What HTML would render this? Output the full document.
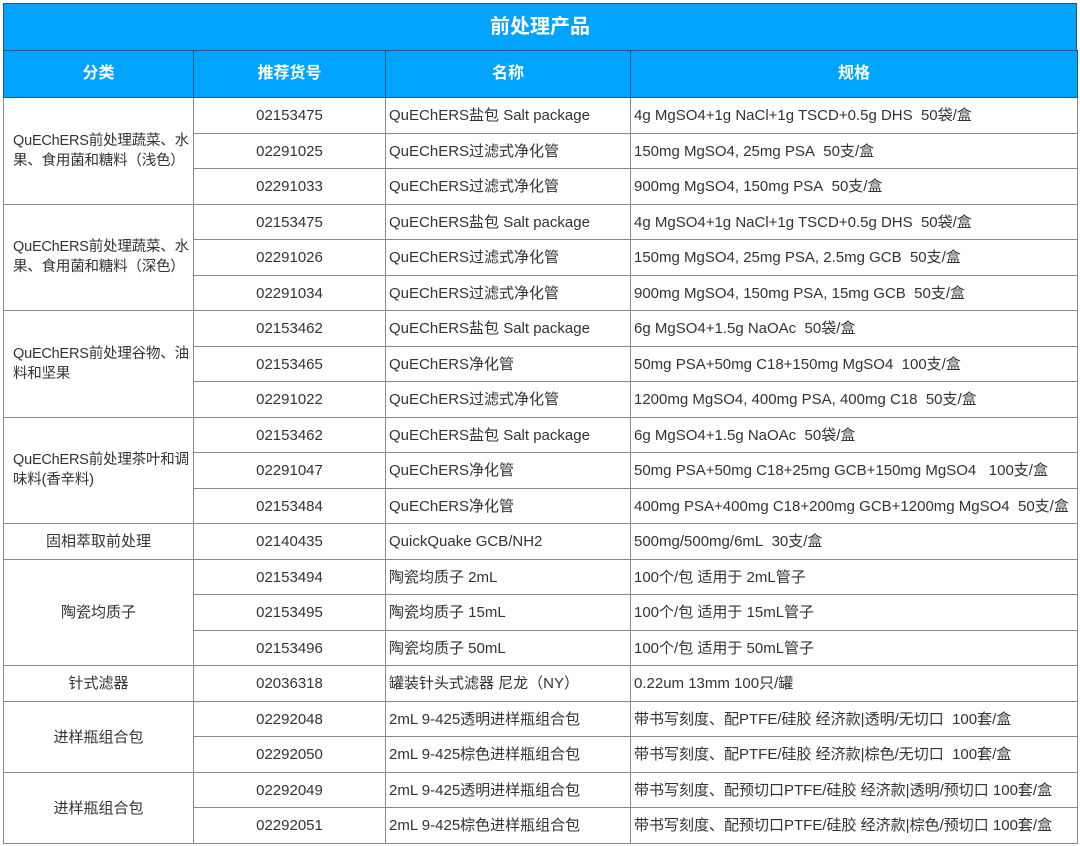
<!DOCTYPE html>
<html><head><meta charset="utf-8"><style>
body{margin:0;background:#fff;width:1080px;height:846px;overflow:hidden;font-family:"Liberation Sans","Noto Sans CJK SC",sans-serif;}
.t{position:absolute;left:3px;top:3px;width:1074px;height:47px;background:#00a3fe;color:#fff;font-weight:bold;font-size:20px;text-align:center;line-height:47px;border:1px solid #1e5a80;box-sizing:border-box;border-bottom:none}
table{position:absolute;left:3px;top:50px;border-collapse:collapse;table-layout:fixed;width:1074px}
td,th{border:1px solid #8a8a8a;font-size:15px;line-height:20px;vertical-align:middle;color:#333;padding:2px 3px 0;height:32.5px;white-space:nowrap;overflow:hidden}
th{background:#00a3fe;color:#fff;font-size:16px;height:46px;padding:0 3px;border-color:#1e5a80}
td.c{text-align:center}
td.w{font-size:14.5px;line-height:20px;text-align:left;padding:0 0 0 9px;letter-spacing:-0.2px}
</style></head><body>
<div class="t">前处理产品</div>
<table>
<colgroup><col style="width:190px"><col style="width:192px"><col style="width:245px"><col style="width:447px"></colgroup>
<tr><th>分类</th><th>推荐货号</th><th>名称</th><th>规格</th></tr>
<tr><td rowspan="3" class="w">QuEChERS前处理蔬菜、水<br>果、食用菌和糖料（浅色）</td><td class="c">02153475</td><td>QuEChERS盐包 Salt package</td><td>4g MgSO4+1g NaCl+1g TSCD+0.5g DHS&nbsp; 50袋/盒</td></tr>
<tr><td class="c">02291025</td><td>QuEChERS过滤式净化管</td><td>150mg MgSO4, 25mg PSA&nbsp; 50支/盒</td></tr>
<tr><td class="c">02291033</td><td>QuEChERS过滤式净化管</td><td>900mg MgSO4, 150mg PSA&nbsp; 50支/盒</td></tr>
<tr><td rowspan="3" class="w">QuEChERS前处理蔬菜、水<br>果、食用菌和糖料（深色）</td><td class="c">02153475</td><td>QuEChERS盐包 Salt package</td><td>4g MgSO4+1g NaCl+1g TSCD+0.5g DHS&nbsp; 50袋/盒</td></tr>
<tr><td class="c">02291026</td><td>QuEChERS过滤式净化管</td><td>150mg MgSO4, 25mg PSA, 2.5mg GCB&nbsp; 50支/盒</td></tr>
<tr><td class="c">02291034</td><td>QuEChERS过滤式净化管</td><td>900mg MgSO4, 150mg PSA, 15mg GCB&nbsp; 50支/盒</td></tr>
<tr><td rowspan="3" class="w">QuEChERS前处理谷物、油<br>料和坚果</td><td class="c">02153462</td><td>QuEChERS盐包 Salt package</td><td>6g MgSO4+1.5g NaOAc&nbsp; 50袋/盒</td></tr>
<tr><td class="c">02153465</td><td>QuEChERS净化管</td><td>50mg PSA+50mg C18+150mg MgSO4&nbsp; 100支/盒</td></tr>
<tr><td class="c">02291022</td><td>QuEChERS过滤式净化管</td><td>1200mg MgSO4, 400mg PSA, 400mg C18&nbsp; 50支/盒</td></tr>
<tr><td rowspan="3" class="w">QuEChERS前处理茶叶和调<br>味料(香辛料)</td><td class="c">02153462</td><td>QuEChERS盐包 Salt package</td><td>6g MgSO4+1.5g NaOAc&nbsp; 50袋/盒</td></tr>
<tr><td class="c">02291047</td><td>QuEChERS净化管</td><td>50mg PSA+50mg C18+25mg GCB+150mg MgSO4&nbsp;&nbsp; 100支/盒</td></tr>
<tr><td class="c">02153484</td><td>QuEChERS净化管</td><td>400mg PSA+400mg C18+200mg GCB+1200mg MgSO4&nbsp; 50支/盒</td></tr>
<tr><td class="c">固相萃取前处理</td><td class="c">02140435</td><td>QuickQuake GCB/NH2</td><td>500mg/500mg/6mL&nbsp; 30支/盒</td></tr>
<tr><td rowspan="3" class="c">陶瓷均质子</td><td class="c">02153494</td><td>陶瓷均质子 2mL</td><td>100个/包 适用于 2mL管子</td></tr>
<tr><td class="c">02153495</td><td>陶瓷均质子 15mL</td><td>100个/包 适用于 15mL管子</td></tr>
<tr><td class="c">02153496</td><td>陶瓷均质子 50mL</td><td>100个/包 适用于 50mL管子</td></tr>
<tr><td class="c">针式滤器</td><td class="c">02036318</td><td>罐装针头式滤器 尼龙（NY）</td><td>0.22um 13mm 100只/罐</td></tr>
<tr><td rowspan="2" class="c">进样瓶组合包</td><td class="c">02292048</td><td>2mL 9-425透明进样瓶组合包</td><td>带书写刻度、配PTFE/硅胶 经济款|透明/无切口&nbsp; 100套/盒</td></tr>
<tr><td class="c">02292050</td><td>2mL 9-425棕色进样瓶组合包</td><td>带书写刻度、配PTFE/硅胶 经济款|棕色/无切口&nbsp; 100套/盒</td></tr>
<tr><td rowspan="2" class="c">进样瓶组合包</td><td class="c">02292049</td><td>2mL 9-425透明进样瓶组合包</td><td>带书写刻度、配预切口PTFE/硅胶 经济款|透明/预切口 100套/盒</td></tr>
<tr><td class="c">02292051</td><td>2mL 9-425棕色进样瓶组合包</td><td>带书写刻度、配预切口PTFE/硅胶 经济款|棕色/预切口 100套/盒</td></tr>
</table>
</body></html>
